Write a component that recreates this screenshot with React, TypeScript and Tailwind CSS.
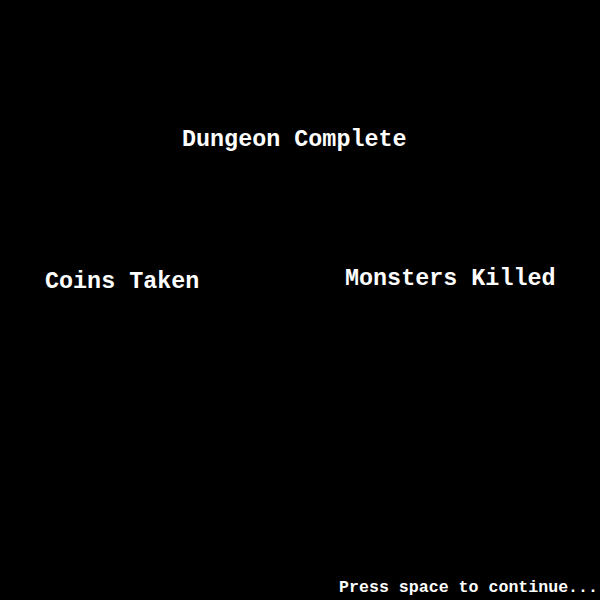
export default function App() {
  return (
    <div className="w-[600px] h-[600px] bg-black text-white font-bold flex flex-col overflow-hidden" style={{ fontFamily: '"Liberation Mono", "Courier New", monospace' }}>
      <div className="pt-[129px] pl-[182px] text-[23.4px] leading-none">Dungeon Complete</div>
      <div className="flex mt-[113px] text-[23.4px] leading-none">
        <div className="ml-[45px] mt-[6px] w-[300px]">Coins Taken</div>
        <div className="mt-[3px]">Monsters Killed</div>
      </div>
      <div className="mt-auto mb-[3px] self-end pr-[2px] text-[16.6px] leading-none">Press space to continue...</div>
    </div>
  );
}
